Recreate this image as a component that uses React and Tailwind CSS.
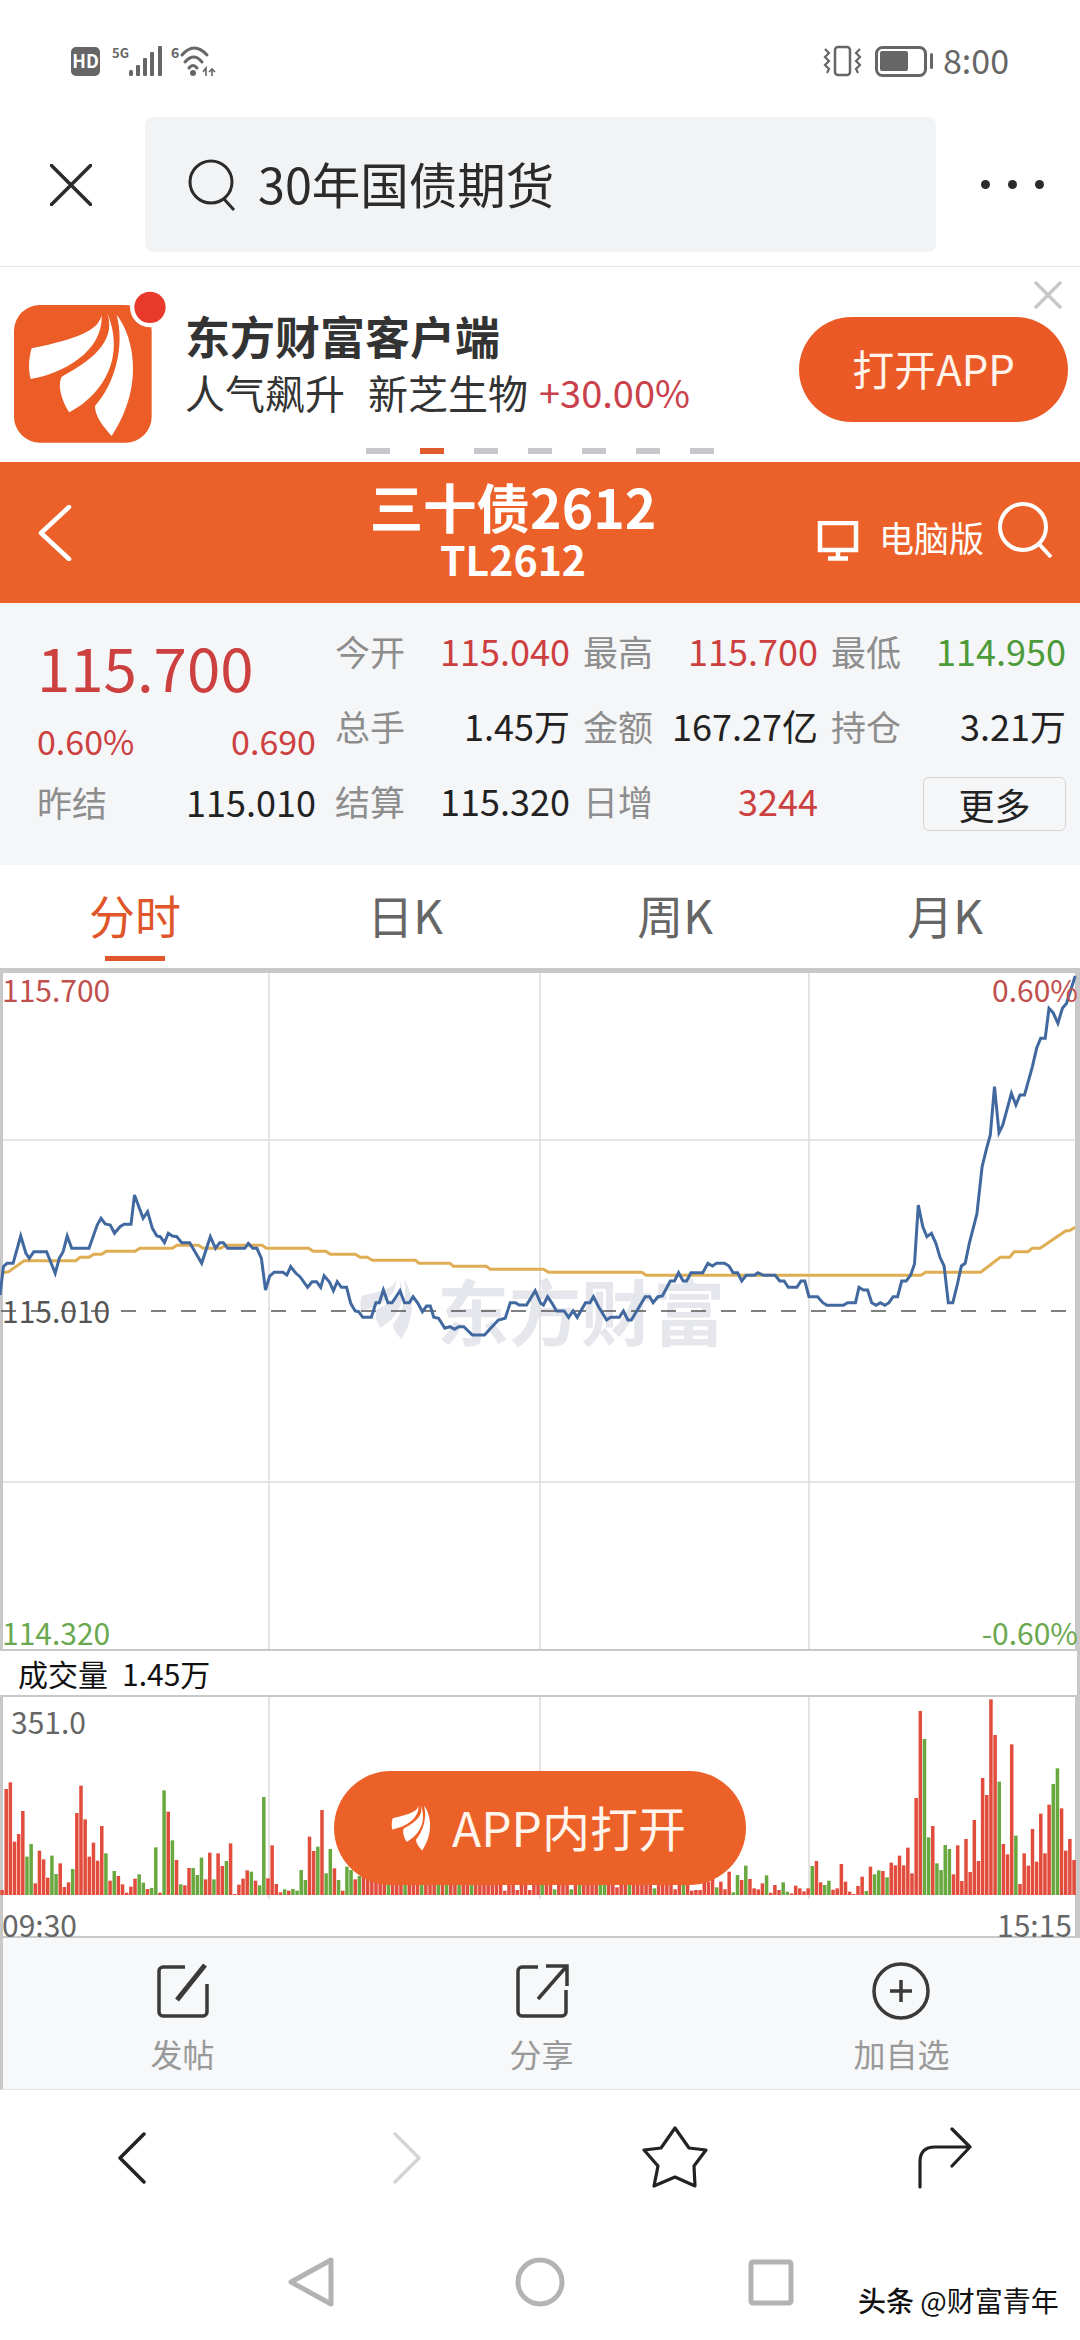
import React from "react";

const scale = (pts, ox, oy) => pts.map(([x, y]) => `${(x / 2.9 + ox).toFixed(1)},${(y / 3 + oy).toFixed(1)}`).join(" ");

const blueA = [[0,495],[10,410],[20,400],[38,400],[60,318],[75,370],[85,385],[98,365],[135,365],[160,430],[172,385],[183,365],[195,318],[208,355],[258,355],[282,285],[293,265],[305,282],[320,285],[332,310],[348,290],[360,283],[380,283],[390,195],[415,265],[428,245],[442,295],[455,318],[465,320],[477,338],[488,310],[500,318],[513,320],[527,338],[550,338],[585,400],[610,320],[625,355],[637,338],[648,338],[660,355],[710,355],[720,340],[733,355],[745,355],[758,385],[770,480],[782,438],[795,427],[820,427],[832,435],[843,410],[858,430],[870,440],[892,472],[905,455],[918,455],[930,472],[940,437],[955,455],[967,482],[978,455],[990,472],[1005,472],[1017,520],[1030,543],[1040,545],[1052,562],[1077,562],[1090,518],[1100,518],[1112,480],[1125,518],[1137,518],[1160,482],[1173,518],[1187,518],[1198,500],[1212,520],[1225,545],[1237,528],[1248,528],[1258,562],[1272,565],[1290,595],[1305,590],[1318,598],[1330,590],[1345,590],[1370,615],[1405,615],[1420,598],[1445,570],[1465,565],[1480,518],[1495,518],[1505,525],[1527,525],[1552,482],[1568,520]];
const blueB = [[10,1035],[22,1010],[35,1030],[48,1053],[70,1053],[83,1072],[96,1053],[108,1072],[132,1028],[145,1028],[155,1010],[170,1040],[193,1080],[205,1072],[230,1072],[242,1053],[255,1080],[265,1080],[305,1010],[318,1010],[328,1028],[342,1010],[355,1008],[378,963],[390,963],[402,938],[415,963],[425,963],[438,938],[472,938],[487,910],[500,918],[512,910],[535,910],[548,918],[560,938],[573,938],[585,963],[598,946],[622,946],[632,938],[648,946],[682,946],[695,963],[708,963],[720,982],[745,982],[757,963],[768,963],[780,1010],[805,1010],[820,1028],[832,1036],[880,1036],[892,1028],[915,1028],[925,982],[938,990],[950,990],[962,1028],[975,1036],[987,1028],[1000,1036],[1012,1028],[1024,1010],[1037,1010],[1049,963],[1062,963],[1075,945],[1086,912],[1097,735],[1110,800],[1122,830],[1135,820],[1148,850],[1160,892],[1172,918],[1184,1028],[1197,1028],[1210,975],[1222,918],[1233,910],[1245,850],[1267,762],[1282,620],[1295,565],[1306,525],[1318,380],[1331,518],[1342,495],[1367,400],[1380,435],[1392,405],[1405,405],[1428,320],[1440,265],[1452,235],[1465,235],[1476,145],[1488,158],[1502,190],[1515,145],[1527,130],[1552,48]];
const goldA = [[10,428],[25,425],[70,392],[220,392],[232,382],[258,382],[272,373],[295,373],[308,364],[392,364],[405,355],[500,355],[513,346],[575,346],[590,355],[640,355],[655,346],[760,346],[772,355],[895,355],[908,364],[945,364],[958,373],[1030,373],[1045,382],[1065,382],[1080,391],[1205,391],[1215,400],[1305,400],[1315,409],[1410,409],[1422,418],[1568,418]];
const goldB = [[10,928],[25,937],[295,937],[308,946],[1105,946],[1118,937],[1278,937],[1335,892],[1362,892],[1375,875],[1415,875],[1428,865],[1450,865],[1525,812],[1535,812],[1552,802]];

// Bar tops in zoom units; a negative value marks a green bar.
const volStart = [750,447,427,605,582,513,-650,-612,730,632,658,713,-647,-702,670,741,727,-687,519,437,538,650,608,662,558,-640,722,-693,708,733,758,740,716,-703,-728,747,-744,-622,758,-451,515,-601,660,-733,736,684,-684,-705,-653,718,638,-718,640,678,-663,610,762,734,716,691,-695,722,-736,-471,715,616,732,757,-748,752,-747,-752,-690,-720,590,633,-620,510,-700,-627,685,-720,752,-680,-690,718,-708];
const volEnd = [725,715,-742,725,748,695,-757,-705,720,-677,717,745,748,730,-706,758,735,750,-727,-755,760,737,745,754,745,-678,663,727,-735,-722,749,745,672,725,755,762,738,710,-753,680,-703,-691,693,-712,668,676,647,676,623,700,474,213,-297,-592,558,-670,-690,-615,-627,703,616,723,597,696,540,663,414,465,178,285,-425,612,643,313,-587,732,640,677,567,665,521,640,494,-432,-385,505,632,597,660];
const hiddenGreen = new Set([93,97,101,105,107,110,113,130,133,137,139,144,145,151,157,164]);
const hiddenShort = { 121: 752, 124: 750, 127: 750, 133: 748, 137: 748, 148: 742, 157: 745, 162: 748, 166: 752, 167: 750, 168: 750 };
const bars = Array.from({ length: 259 }, (_, i) => {
  if (i < volStart.length) return volStart[i];
  const fromEnd = i - (259 - volEnd.length);
  if (fromEnd >= 0) return volEnd[fromEnd];
  const top = hiddenShort[i] ?? 700;
  return hiddenGreen.has(i) ? -top : top;
});

function Wings({ fill }) {
  return (
    <g fill={fill}>
      <path d="M305 105C295 150 240 175 95 205C85 240 85 270 92 297C190 280 310 215 305 105Z" />
      <path d="M322 100C345 170 300 230 185 290C170 320 190 370 208 397C300 350 380 240 322 100Z" />
      <path d="M350 105C395 160 440 310 335 468C310 440 285 410 285 378C345 310 375 200 350 105Z" />
    </g>
  );
}

function StatCell({ label, value, color }) {
  return (
    <div className="flex items-center justify-between h-[75px]">
      <span className="text-[35px] leading-none text-[#8d8d8d]">{label}</span>
      {value ? <span className={`text-[36px] leading-none pb-[2px] ${color}`}>{value}</span> : null}
    </div>
  );
}

export default function App() {
  return (
    <div className="w-[1080px] h-[2340px] bg-white flex flex-col overflow-hidden font-['Noto_Sans_CJK_SC',sans-serif]">
      {/* status bar */}
      <div className="h-[117px] flex justify-between items-start pt-[40px] pl-[71px] pr-[71px]">
        <svg width="146" height="40" viewBox="71 40 146 40">
          <rect x="71" y="47" width="29" height="29" rx="5" fill="#666" />
          <text x="85.5" y="68" textAnchor="middle" fontSize="18" fontWeight="700" fill="#fff">HD</text>
          <text x="112" y="58" fontSize="13" fontWeight="700" fill="#666">5G</text>
          <g fill="#666">
            <rect x="129" y="70" width="4" height="6" rx="1.5" />
            <rect x="136" y="65" width="4" height="11" rx="1" />
            <rect x="143" y="58" width="4" height="18" rx="1" />
            <rect x="150" y="52" width="4" height="24" rx="1" />
            <rect x="158" y="46" width="4" height="30" rx="1" />
          </g>
          <text x="171" y="58" fontSize="14" fontWeight="700" fill="#666">6</text>
          <g fill="none" stroke="#666" strokeWidth="3" strokeLinecap="round">
            <path d="M182 55Q194 41 207 55" />
            <path d="M185 62Q194 52 202 62" />
            <path d="M189 68Q193 63 197 68" />
          </g>
          <circle cx="193" cy="73" r="3" fill="#666" />
          <path d="M203 72l3-4v8M212 69v7M209 72l3-3 3 3" fill="none" stroke="#666" strokeWidth="1.6" />
        </svg>
        <div className="flex items-center h-[40px]">
          <svg width="114" height="40" viewBox="820 40 114 40">
            <rect x="835" y="47" width="15" height="28" rx="3" fill="none" stroke="#666" strokeWidth="2.5" />
            <path d="M825 49l4 4-4 4 4 4-4 4 4 4-2 4M860 49l-4 4 4 4-4 4 4 4-4 4 2 4" fill="none" stroke="#666" strokeWidth="2.2" />
            <rect x="876.5" y="47.5" width="49" height="28" rx="6" fill="none" stroke="#666" strokeWidth="3" />
            <rect x="880" y="51" width="28" height="20" rx="2" fill="#666" />
            <rect x="930" y="53" width="3" height="16" rx="1.5" fill="#666" />
          </svg>
          <span className="ml-[9px] text-[34px] leading-none text-[#666]">8:00</span>
        </div>
      </div>

      {/* search row */}
      <div className="h-[150px] border-b border-[#e5e5e5] flex items-start">
        <div className="w-[145px] h-[135px] flex items-center pl-[50px]">
          <svg width="42" height="42" viewBox="0 0 42 42">
            <path d="M1.5 1.5L40.5 40.5M40.5 1.5L1.5 40.5" stroke="#2b2b2b" strokeWidth="3.5" strokeLinecap="round" />
          </svg>
        </div>
        <div className="w-[791px] h-[135px] rounded-[8px] bg-[#f1f3f5] flex items-center pl-[43px]">
          <svg width="50" height="52" viewBox="0 0 50 52">
            <circle cx="23" cy="23" r="21" fill="none" stroke="#2b2b2b" strokeWidth="3" />
            <path d="M36 40L46 51" stroke="#2b2b2b" strokeWidth="3" />
          </svg>
          <span className="ml-[20px] pb-[2px] text-[48.5px] leading-none text-[#2b2b2b]">30年国债期货</span>
        </div>
        <div className="flex-1 h-[135px] flex items-center justify-center gap-[18px] pl-[8px]">
          <span className="w-[9px] h-[9px] rounded-full bg-[#2b2b2b]" />
          <span className="w-[9px] h-[9px] rounded-full bg-[#2b2b2b]" />
          <span className="w-[9px] h-[9px] rounded-full bg-[#2b2b2b]" />
        </div>
      </div>

      {/* banner */}
      <div className="relative h-[195px] flex items-start pt-[13px]">
        <svg width="180" height="180" viewBox="0 0 540 540">
          <rect x="42" y="75" width="413" height="413" rx="78" fill="#ec5c26" />
          <circle cx="450" cy="82" r="60" fill="#fff" />
          <circle cx="450" cy="82" r="47" fill="#e8392a" />
          <Wings fill="#fff" />
        </svg>
        <div className="ml-[5px] mt-[33px] flex flex-col">
          <span className="text-[45px] leading-none font-bold text-[#333]">东方财富客户端</span>
          <div className="mt-[14px] flex items-center">
            <span className="text-[40px] leading-none text-[#333]">人气飙升</span>
            <span className="ml-[23px] text-[40px] leading-none text-[#333]">新芝生物</span>
            <span className="ml-[11px] text-[38px] leading-none text-[#c9414a]">+30.00%</span>
          </div>
        </div>
        <div className="absolute left-[799px] top-[50px] w-[269px] h-[105px] rounded-full bg-[#eb5a26] flex items-center justify-center pb-[4px] text-[42px] leading-none text-[#fff3ea]">
          打开APP
        </div>
        <svg className="absolute left-[1033px] top-[13px]" width="30" height="30" viewBox="0 0 30 30">
          <path d="M2 2L28 28M28 2L2 28" stroke="#c8c8c8" strokeWidth="3.5" />
        </svg>
        <div className="absolute left-[366px] top-[181px] flex gap-[30px]">
          <span className="w-[24px] h-[6px] bg-[#c8c8cc]" />
          <span className="w-[24px] h-[6px] bg-[#e05a2b]" />
          <span className="w-[24px] h-[6px] bg-[#c8c8cc]" />
          <span className="w-[24px] h-[6px] bg-[#c8c8cc]" />
          <span className="w-[24px] h-[6px] bg-[#c8c8cc]" />
          <span className="w-[24px] h-[6px] bg-[#c8c8cc]" />
          <span className="w-[24px] h-[6px] bg-[#c8c8cc]" />
        </div>
      </div>

      {/* orange header */}
      <div className="h-[141px] bg-[#ec6129] flex items-center text-white">
        <div className="w-[372px] pl-[38px]">
          <svg className="block" width="34" height="56" viewBox="0 0 34 56">
            <path d="M31 2L3 28L31 54" fill="none" stroke="#fff" strokeWidth="4.5" strokeLinecap="round" strokeLinejoin="round" />
          </svg>
        </div>
        <div className="w-[282px] flex flex-col items-center pb-[10px]">
          <span className="text-[53.5px] leading-[60px] font-bold whitespace-nowrap">三十债2612</span>
          <span className="text-[41px] leading-[44px] font-bold">TL2612</span>
        </div>
        <div className="flex items-center ml-[163px]">
          <svg className="mt-[16px]" width="42" height="40" viewBox="0 0 42 40">
            <rect x="3" y="2" width="36" height="27" fill="none" stroke="#fff" strokeWidth="4.5" />
            <path d="M21 30v7M11 37.5h20" stroke="#fff" strokeWidth="4.5" />
          </svg>
          <span className="ml-[20px] mt-[8px] text-[35px] leading-none whitespace-nowrap">电脑版</span>
          <svg className="ml-[13px] mb-[6px]" width="58" height="58" viewBox="0 0 58 58">
            <circle cx="26" cy="26" r="23" fill="none" stroke="#fff" strokeWidth="4" />
            <path d="M42 43L54 56" stroke="#fff" strokeWidth="4" />
          </svg>
        </div>
      </div>

      {/* quote stats */}
      <div className="h-[262px] bg-[#f5f6f8] flex pl-[37px] pt-[10px]">
        <div className="w-[279px] flex flex-col">
          <div className="h-[110px] flex items-center pb-[4px] text-[60px] leading-none text-[#cc4040]">115.700</div>
          <div className="h-[36px] flex items-center justify-between text-[34px] leading-none text-[#cc4040]">
            <span>0.60%</span>
            <span>0.690</span>
          </div>
          <div className="mt-[24px] h-[36px] flex items-center justify-between">
            <span className="text-[35px] leading-none text-[#8d8d8d]">昨结</span>
            <span className="text-[36px] leading-none text-[#222]">115.010</span>
          </div>
        </div>
        <div className="ml-[19px] grid grid-cols-[235px_235px_235px] gap-x-[13px] h-[225px]">
          <StatCell label="今开" value="115.040" color="text-[#cc4040]" />
          <StatCell label="最高" value="115.700" color="text-[#cc4040]" />
          <StatCell label="最低" value="114.950" color="text-[#4d9a3a]" />
          <StatCell label="总手" value="1.45万" color="text-[#222]" />
          <StatCell label="金额" value="167.27亿" color="text-[#222]" />
          <StatCell label="持仓" value="3.21万" color="text-[#222]" />
          <StatCell label="结算" value="115.320" color="text-[#222]" />
          <StatCell label="日增" value="3244" color="text-[#cc4040]" />
          <div className="h-[75px] flex items-center justify-end pt-[6px]">
            <div className="w-[143px] h-[54px] rounded-[6px] border border-[#d4d4d4] flex items-center justify-center text-[36px] leading-none text-[#222]">更多</div>
          </div>
        </div>
      </div>

      {/* tabs */}
      <div className="h-[103px] grid grid-cols-4">
        <div className="relative flex items-center justify-center pb-[6px] text-[46px] leading-none text-[#e0562a]">
          分时
          <span className="absolute left-[105px] top-[91px] w-[60px] h-[5px] bg-[#e0562a]" />
        </div>
        <div className="flex items-center justify-center pb-[6px] text-[46px] leading-none text-[#666]">日K</div>
        <div className="flex items-center justify-center pb-[6px] text-[46px] leading-none text-[#666]">周K</div>
        <div className="flex items-center justify-center pb-[6px] text-[46px] leading-none text-[#666]">月K</div>
      </div>

      {/* price chart */}
      <div className="relative h-[683px] border-t-[5px] border-b-[2px] border-l-[3px] border-r-[5px] border-[#c8c8c8]">
        <span className="absolute left-[434px] top-[300px] text-[72px] leading-none font-bold text-[#e6e7ec] whitespace-nowrap">东方财富</span>
        <svg className="absolute left-[-3px] top-[-5px]" width="1080" height="683" viewBox="0 968 1080 683">
          <g stroke="#dcdcdc" strokeWidth="1.5">
            <path d="M269 973V1649M540 973V1649M809 973V1649M3 1140H1075M3 1482H1075" />
          </g>
          <g transform="translate(346 1262) scale(0.165)"><Wings fill="#e6e7ec" /></g>
          <path d="M1 1311H1070" stroke="#555" strokeWidth="1.5" strokeDasharray="15 15" />
          <polyline points={`${scale(goldA, 0, 1130)} ${scale(goldB, 540, 960)}`} fill="none" stroke="#dfad54" strokeWidth="3" />
          <polyline points={`${scale(blueA, 0, 1130)} ${scale(blueB, 540, 960)}`} fill="none" stroke="#41699f" strokeWidth="3" />
        </svg>
        <span className="absolute left-[-1px] top-[1px] text-[30px] leading-none text-[#c0504d]">115.700</span>
        <span className="absolute right-[-3px] top-[1px] text-[30px] leading-none text-[#c0504d]">0.60%</span>
        <span className="absolute left-[-1px] top-[322px] text-[30px] leading-none text-[#555]">115.010</span>
        <span className="absolute left-[-1px] bottom-[2px] text-[30px] leading-none text-[#6aa84f]">114.320</span>
        <span className="absolute right-[-3px] bottom-[2px] text-[30px] leading-none text-[#6aa84f]">-0.60%</span>
      </div>

      {/* volume label */}
      <div className="h-[44px] flex items-center pl-[18px] pr-[5px] pb-[1px] border-r-[3px] border-[#c8c8c8] text-[30px] leading-none text-[#111]">
        <span>成交量</span>
        <span className="ml-[14px]">1.45万</span>
      </div>

      {/* volume chart */}
      <div className="relative h-[243px] border-t-[2px] border-b-[2px] border-l-[3px] border-r-[5px] border-[#c8c8c8]">
        <svg className="absolute left-[-3px] top-[-2px]" width="1080" height="243" viewBox="0 1695 1080 243">
          <path d="M269 1697V1899M540 1697V1899M809 1697V1899" stroke="#dcdcdc" strokeWidth="1.5" />
          {bars.map((t, i) => {
            const top = 1640 + Math.abs(t) / 3;
            return <rect key={i} x={i * 4.155 + 0.3} y={top} width="3.5" height={1895 - top} fill={t < 0 ? "#68a83f" : "#e14c3c"} />;
          })}
        </svg>
        <span className="absolute left-[8px] top-[9px] text-[30px] leading-none text-[#666]">351.0</span>
        <span className="absolute left-[-1px] top-[212px] text-[30px] leading-none text-[#666]">09:30</span>
        <span className="absolute right-[3px] top-[212px] text-[30px] leading-none text-[#666]">15:15</span>
        <div className="absolute left-[331px] top-[74px] w-[412px] h-[114px] rounded-full bg-[#ec6128] flex items-center pl-[55px] text-white">
          <svg width="48" height="48" viewBox="70 90 380 390"><Wings fill="#fff" /></svg>
          <span className="ml-[15px] pb-[5px] text-[48px] leading-none text-[#fff5ec] whitespace-nowrap">APP内打开</span>
        </div>
      </div>

      {/* actions */}
      <div className="h-[152px] bg-[#f7f8fa] border-l-[3px] border-b border-l-[#c8c8c8] border-b-[#e5e5e5] grid grid-cols-3">
        <div className="flex flex-col items-center pt-[24px]">
          <svg width="56" height="58" viewBox="0 0 56 58">
            <path d="M30 5H8a4 4 0 0 0-4 4V50a4 4 0 0 0 4 4H48a4 4 0 0 0 4-4V22" fill="none" stroke="#3a3a3a" strokeWidth="3.5" />
            <path d="M50 3L22 38" stroke="#3a3a3a" strokeWidth="5" />
          </svg>
          <span className="mt-[17px] text-[32px] leading-none text-[#999]">发帖</span>
        </div>
        <div className="flex flex-col items-center pt-[24px]">
          <svg width="56" height="58" viewBox="0 0 56 58">
            <path d="M24 5H8a4 4 0 0 0-4 4V50a4 4 0 0 0 4 4H48a4 4 0 0 0 4-4V28" fill="none" stroke="#3a3a3a" strokeWidth="3.5" />
            <path d="M24 37L52 5M32 4H53V24" fill="none" stroke="#3a3a3a" strokeWidth="3.5" />
          </svg>
          <span className="mt-[17px] text-[32px] leading-none text-[#999]">分享</span>
        </div>
        <div className="flex flex-col items-center pt-[24px]">
          <svg width="58" height="58" viewBox="0 0 58 58">
            <circle cx="29" cy="29" r="27" fill="none" stroke="#3a3a3a" strokeWidth="3.5" />
            <path d="M29 18V40M18 29H40" stroke="#3a3a3a" strokeWidth="3.5" />
          </svg>
          <span className="mt-[17px] text-[32px] leading-none text-[#999] pl-[2px]">加自选</span>
        </div>
      </div>

      {/* browser nav */}
      <div className="h-[140px] grid grid-cols-4 items-center pb-[4px]">
        <div className="flex justify-center pr-[6px]">
          <svg width="30" height="52" viewBox="0 0 30 52"><path d="M27 2L3 26L27 50" fill="none" stroke="#222" strokeWidth="3.5" strokeLinecap="round" strokeLinejoin="round" /></svg>
        </div>
        <div className="flex justify-center pl-[4px]">
          <svg width="30" height="52" viewBox="0 0 30 52"><path d="M3 2L27 26L3 50" fill="none" stroke="#d5d5d5" strokeWidth="3.5" strokeLinecap="round" strokeLinejoin="round" /></svg>
        </div>
        <div className="flex justify-center">
          <svg width="66" height="64" viewBox="642 2125 66 64">
            <path d="M675 2127L689 2147L706 2149L694 2165L695 2185L675 2176L654 2185L658 2165L644 2149L661 2147Z" fill="none" stroke="#222" strokeWidth="3.2" strokeLinejoin="round" />
          </svg>
        </div>
        <div className="flex justify-center">
          <svg width="56" height="62" viewBox="917 2125 56 62">
            <path d="M920 2185V2160Q920 2145 935 2145H970M952 2127L970 2145L952 2164" fill="none" stroke="#222" strokeWidth="3.2" strokeLinecap="round" strokeLinejoin="round" />
          </svg>
        </div>
      </div>

      {/* system nav */}
      <div className="relative flex-1 flex items-start justify-center gap-[170px] pt-[25px]">
        <svg width="60" height="54" viewBox="279 2255 60 54">
          <path d="M330 2260L290 2282L330 2304Z" fill="none" stroke="#b3b3b3" strokeWidth="5" strokeLinejoin="round" />
        </svg>
        <svg width="60" height="54" viewBox="510 2255 60 54">
          <circle cx="540" cy="2282" r="22" fill="none" stroke="#b3b3b3" strokeWidth="5" />
        </svg>
        <svg width="60" height="54" viewBox="738 2255 60 54">
          <rect x="749" y="2262" width="40" height="41" rx="2" fill="none" stroke="#b3b3b3" strokeWidth="5" />
        </svg>
        <span className="absolute left-[858px] top-[56px] text-[28px] leading-none text-[#111] whitespace-nowrap">
          <b className="font-medium">头条</b> @财富青年
        </span>
      </div>
    </div>
  );
}
